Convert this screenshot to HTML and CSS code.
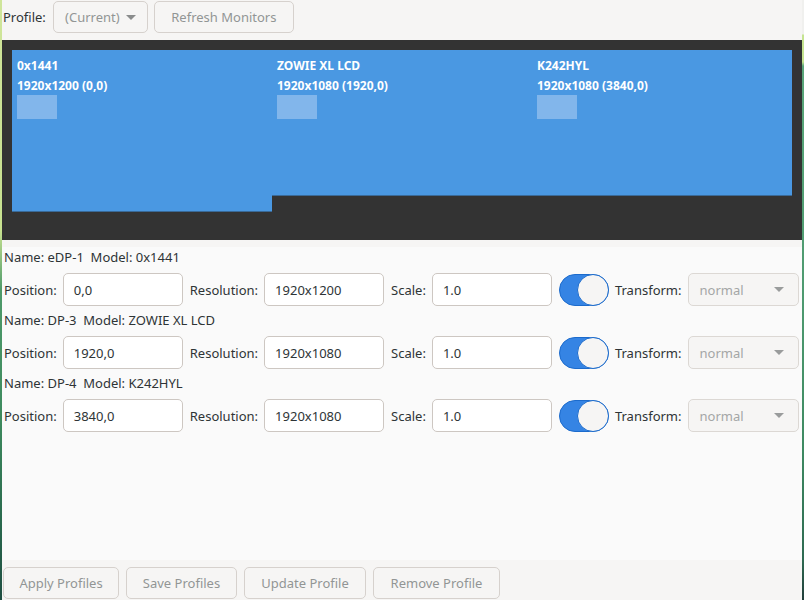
FILE: index.html
```html
<!DOCTYPE html>
<html>
<head>
<meta charset="utf-8">
<link rel="stylesheet" href="styles.css">
</head>
<body>
<div class="screen">
  <div class="edge edge-left"></div>
  <div class="window">
    <div class="topbar">
      <span class="label">Profile:</span>
      <div class="btn combo-btn disabled">(Current) <span class="arrow"></span></div>
      <div class="btn refresh disabled">Refresh Monitors</div>
    </div>
    <div class="canvas">
      <div class="monitor m1">
        <div class="mname">0x1441</div>
        <div class="mres">1920x1200 (0,0)</div>
        <div class="mbox"></div>
      </div>
      <div class="monitor m2">
        <div class="mname">ZOWIE XL LCD</div>
        <div class="mres">1920x1080 (1920,0)</div>
        <div class="mbox"></div>
      </div>
      <div class="monitor m3">
        <div class="mname">K242HYL</div>
        <div class="mres">1920x1080 (3840,0)</div>
        <div class="mbox"></div>
      </div>
    </div>
    <div class="panel">
      <div class="sep"></div>
      <div class="outputs">
        <div class="output">
          <div class="name">Name: eDP-1&nbsp; Model: 0x1441</div>
          <div class="row">
            <span class="label">Position:</span><div class="entry">0,0</div>
            <span class="label">Resolution:</span><div class="entry">1920x1200</div>
            <span class="label">Scale:</span><div class="entry">1.0</div>
            <div class="switch"><div class="knob"></div></div>
            <span class="label">Transform:</span><div class="combo">normal<span class="arrow"></span></div>
          </div>
        </div>
        <div class="output">
          <div class="name">Name: DP-3&nbsp; Model: ZOWIE XL LCD</div>
          <div class="row">
            <span class="label">Position:</span><div class="entry">1920,0</div>
            <span class="label">Resolution:</span><div class="entry">1920x1080</div>
            <span class="label">Scale:</span><div class="entry">1.0</div>
            <div class="switch"><div class="knob"></div></div>
            <span class="label">Transform:</span><div class="combo">normal<span class="arrow"></span></div>
          </div>
        </div>
        <div class="output">
          <div class="name">Name: DP-4&nbsp; Model: K242HYL</div>
          <div class="row">
            <span class="label">Position:</span><div class="entry">3840,0</div>
            <span class="label">Resolution:</span><div class="entry">1920x1080</div>
            <span class="label">Scale:</span><div class="entry">1.0</div>
            <div class="switch"><div class="knob"></div></div>
            <span class="label">Transform:</span><div class="combo">normal<span class="arrow"></span></div>
          </div>
        </div>
      </div>
    </div>
    <div class="bottombar">
      <div class="btn b-apply disabled">Apply Profiles</div>
      <div class="btn b-save disabled">Save Profiles</div>
      <div class="btn b-update disabled">Update Profile</div>
      <div class="btn b-remove disabled">Remove Profile</div>
    </div>
  </div>
  <div class="edge edge-right"></div>
</div>
</body>
</html>
```
FILE: styles.css
```css
* { box-sizing: border-box; }
html, body { margin: 0; padding: 0; }
body {
  width: 804px;
  height: 600px;
  overflow: hidden;
  font-family: "Noto Sans", "Open Sans", sans-serif;
  font-size: 13px;
  color: #2e3436;
  background: #f6f5f4;
}
.screen { display: flex; width: 804px; height: 600px; }
.edge { width: 2px; flex: none; }
.edge-left {
  background: linear-gradient(to bottom, #cfe59a 0px, #c8e290 230px, #4e9a6a 290px, #3d8a5e 420px, #2a6a4e 520px, #1f4e42 600px);
}
.edge-right {
  background: linear-gradient(to bottom, #f0f0ee 0px, #f0f0ee 34px, #c5e490 35px, #c5e490 62px, #5aa67a 66px, #4e9a70 300px, #3e8a62 450px, #2e6a52 560px, #223e3a 600px);
}
.window { flex: 1; display: flex; flex-direction: column; min-width: 0; }

.topbar {
  height: 40px;
  background: #f6f5f4;
  display: flex;
  align-items: flex-start;
  padding: 1px 0 0 1px;
}
.topbar .label { line-height: 32px; margin-right: 7px; }
.btn {
  height: 32px;
  border: 1px solid #d6d1cd;
  border-radius: 5px;
  background: #f6f5f4;
  display: flex;
  align-items: center;
  justify-content: center;
  line-height: 1;
}
.disabled { color: #929595; }
.combo-btn { width: 95px; margin-right: 6px; gap: 6px; }
.refresh { width: 140px; }
.arrow {
  display: inline-block;
  width: 0; height: 0;
  border-left: 5px solid transparent;
  border-right: 5px solid transparent;
  border-top: 5px solid #8a8c8c;
}

.canvas {
  height: 200px;
  background: #333333;
  position: relative;
}
.monitor {
  position: absolute;
  top: 10px;
  width: 260px;
  background: #4a98e2;
  border-bottom: 1px solid #3a6a98;
  color: #ffffff;
  font-weight: bold;
  font-size: 12px;
  padding: 8px 5px 0 5px;
}
.m1 { left: 10px; height: 162px; }
.m2 { left: 270px; height: 146px; }
.m3 { left: 530px; height: 146px; }
.mname { line-height: 16px; height: 16px; }
.mres { line-height: 16px; height: 16px; margin-top: 4px; }
.mbox { width: 40px; height: 24px; background: #82b6eb; margin-top: 1px; }

.panel { flex: 1; background: #fafafa; display: flex; flex-direction: column; }
.sep { height: 7px; background: #f6f5f4; }
.outputs { padding-left: 2px; }
.output { margin-bottom: 4px; }
.name { height: 20px; line-height: 20px; margin-bottom: 6px; }
.row { display: flex; align-items: center; height: 33px; }
.row .label { margin-right: 6px; }
.entry {
  width: 120px;
  height: 33px;
  border: 1px solid #cdc7c2;
  border-radius: 5px;
  background: #ffffff;
  padding: 0 10px;
  display: flex;
  align-items: center;
  margin-right: 7px;
}
.switch {
  width: 50px;
  height: 32px;
  border-radius: 16px;
  background: #3584e4;
  border: 1px solid #1c6bcc;
  position: relative;
  margin-right: 6px;
}
.knob {
  position: absolute;
  right: -1px;
  top: -1px;
  width: 32px;
  height: 32px;
  border-radius: 50%;
  background: #f6f5f4;
  border: 1px solid #1c6bcc;
}
.combo {
  width: 111px;
  height: 33px;
  border: 1px solid #dcd8d4;
  border-radius: 5px;
  background: #f6f5f4;
  color: #a4a6a6;
  display: flex;
  align-items: center;
  justify-content: space-between;
  padding: 0 14px 0 11px;
}
.combo .arrow { border-top-color: #9a9c9c; }

.bottombar {
  height: 40px;
  background: #f6f5f4;
  display: flex;
  align-items: flex-start;
  padding: 7px 0 0 1px;
  gap: 7px;
}
.b-apply { width: 116px; }
.b-save { width: 111px; }
.b-update { width: 122px; }
.b-remove { width: 127px; }
```
